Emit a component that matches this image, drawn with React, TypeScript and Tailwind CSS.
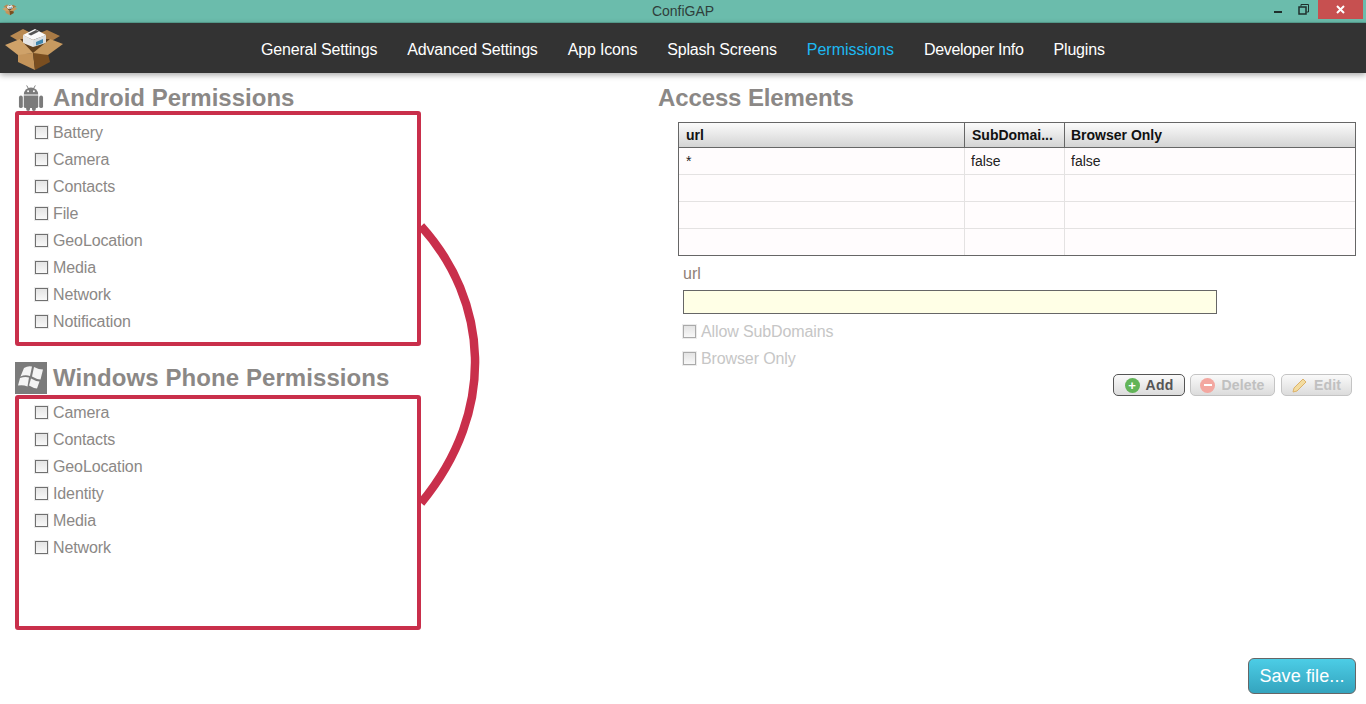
const androidPermissions = ['Battery', 'Camera', 'Contacts', 'File', 'GeoLocation', 'Media', 'Network', 'Notification'];
const windowsPermissions = ['Camera', 'Contacts', 'GeoLocation', 'Identity', 'Media', 'Network'];
const navItems = ['General Settings', 'Advanced Settings', 'App Icons', 'Splash Screens', 'Permissions', 'Developer Info', 'Plugins'];
const rows = [
  ['*', 'false', 'false'],
  ['', '', ''],
  ['', '', ''],
  ['', '', ''],
];

function BoxLogo({ className }: { className: string }) {
  return (
    <svg viewBox="0 0 66 50" className={className}>
      {/* back flaps */}
      <polygon points="10,13 23,6 35,12 22,20" fill="#b98a52" />
      <polygon points="47,7 60,13 48,20 35,12" fill="#a87a45" />
      <polygon points="20,16 50,16 48,26 33,30 20,26" fill="#5f3f1d" />
      {/* the white box */}
      <polygon points="23,12 35,6 46,12 33,17" fill="#fafafa" />
      <polygon points="23,12 33,17 33,24 23,20" fill="#e6e6e6" />
      <polygon points="33,17 46,12 46,20 33,24" fill="#d8dde0" />
      <polygon points="28,11 36,7 39,8.500 31,12.500" fill="#555555" />
      <polygon points="36,19 43,16 43,20 36,22.500" fill="#3f86ad" />
      {/* carton */}
      <polygon points="18,31 33,30 35,47 18,39" fill="#c4945a" />
      <polygon points="33,30 48,31 50,39 35,47" fill="#7a4e20" />
      <polygon points="5,22 20,16 33,30 18,32" fill="#cfa269" />
      <polygon points="63,21 50,16 33,30 48,32" fill="#c79a60" />
    </svg>
  );
}

function Check({ label, muted }: { label: string; muted?: boolean }) {
  return (
    <label className={`flex h-[27px] items-center gap-[5px] text-base tracking-[-0.12px] ${muted ? 'text-[#c6c6c6]' : 'text-[#8b8886]'}`}>
      <span className={`h-[13px] w-[13px] border bg-gradient-to-b from-[#e4e4e4] to-[#f8f8f8] shadow-[0_0_0_1px_#ececec] ${muted ? 'border-[#aaaaaa]' : 'border-[#707070]'}`} />
      {label}
    </label>
  );
}

function AndroidIcon() {
  return (
    <svg viewBox="0 0 26 28" className="h-[27px] w-[26px]">
      <g fill="#7b7b7b">
        <path d="M5.500 11a7.500 7.500 0 0 1 15 0z" />
        <path d="M5.500 12h15v11a2 2 0 0 1-2 2h-11a2 2 0 0 1-2-2z" />
        <rect x="0.500" y="12" width="4" height="13" rx="2" />
        <rect x="21.500" y="12" width="4" height="13" rx="2" />
        <rect x="8" y="23" width="4" height="5" rx="2" />
        <rect x="14" y="23" width="4" height="5" rx="2" />
      </g>
      <path d="M8.500 1.500l2 3.500M17.500 1.500l-2 3.500" stroke="#7b7b7b" strokeWidth="1" />
      <circle cx="10" cy="7.500" r="1" fill="#ffffff" />
      <circle cx="16" cy="7.500" r="1" fill="#ffffff" />
    </svg>
  );
}

function WindowsIcon() {
  return (
    <div className="h-8 w-8 bg-[#7b7b7b]">
      <svg viewBox="0 0 32 32" className="h-8 w-8">
        <g fill="#f4f4f4">
          <path d="M9 6Q13 3.500 17 4.500L15 14Q10 12.500 5.500 14.500z" />
          <path d="M19 5Q24 7.500 28 7.500L25.500 17.500Q21 17 17 14.500z" />
          <path d="M5 16Q10 14.500 14 15.500L12.500 24.500Q8 22.500 3 23.500z" />
          <path d="M16 16.500Q20 19 24.500 19.500L22 26.500Q18 26 14 23.500z" />
        </g>
      </svg>
    </div>
  );
}

function ActionButton({ label, muted, className, children }: { label: string; muted?: boolean; className: string; children: React.ReactNode }) {
  return (
    <button className={`flex h-[22px] items-center justify-center gap-[6px] rounded-[5px] border bg-gradient-to-b from-[#fafafa] to-[#dcdcdc] text-sm font-bold tracking-[0.2px] ${muted ? 'border-[#c4c4c4] text-[#c0c0c0]' : 'border-[#555555] text-[#555555]'} ${className}`}>
      {children}
      {label}
    </button>
  );
}

export default function App() {
  return (
    <div className="relative flex h-[704px] w-[1366px] flex-col overflow-hidden bg-white font-['Liberation_Sans',Arial,sans-serif]">
      {/* title bar */}
      <div className="relative flex h-[23px] shrink-0 items-center justify-center border-b border-[#5aa595] bg-[#6bbcac] pb-[1px] text-sm text-[#2f3f3b]">
        <BoxLogo className="absolute left-[1px] top-[3px] h-[13px] w-[17px]" />
        ConfiGAP
        <div className="absolute right-[3px] top-0 flex h-[19px] items-start">
          <span className="mr-[16px] mt-[11px] h-[2px] w-[8px] bg-[#1f2f2c]" />
          <svg viewBox="0 0 11 11" className="mr-[9px] mt-[4px] h-[11px] w-[11px]">
            <path d="M3 2.500V.5h7.500V8H8.500" fill="none" stroke="#1f2f2c" />
            <rect x="1" y="3" width="7" height="7" fill="none" stroke="#1f2f2c" strokeWidth="1.500" />
          </svg>
          <span className="flex h-[19px] w-[45px] items-center justify-center bg-[#c75050]">
            <svg viewBox="0 0 9 9" className="h-[9px] w-[9px]">
              <path d="M1 1l7 7M8 1L1 8" stroke="#ffffff" strokeWidth="2" />
            </svg>
          </span>
        </div>
      </div>

      {/* nav */}
      <div className="relative z-10 flex h-[50px] shrink-0 items-center bg-[#333333] pl-[261px] pt-[3px] shadow-[0_2px_6px_rgba(0,0,0,0.35)]">
        <BoxLogo className="absolute left-0 top-0 h-[50px] w-[66px]" />
        <nav className="flex gap-[30px] text-base text-white">
          {navItems.map((item) => (
            <span
              key={item}
              className={item === 'Permissions' ? 'text-[#1db9f2]' : item === 'Developer Info' ? 'tracking-[-0.32px]' : 'tracking-[-0.18px]'}
            >
              {item}
            </span>
          ))}
        </nav>
      </div>

      <div className="flex flex-1">
        {/* left column */}
        <div className="w-[658px] shrink-0 pl-[15px]">
          <div className="flex h-[38px] items-end gap-[9px] pl-[3px]">
            <AndroidIcon />
            <h2 className="text-2xl font-bold leading-[26px] text-[#8b8886]">Android Permissions</h2>
          </div>
          <div className="h-[235px] w-[406px] rounded-[3px] border-4 border-[#c92f4b] pl-4 pt-1">
            {androidPermissions.map((p) => (
              <Check key={p} label={p} />
            ))}
          </div>
          <div className="mt-[17px] flex h-8 items-center gap-[6px] pb-[2px]">
            <WindowsIcon />
            <h2 className="text-2xl font-bold tracking-[0.08px] text-[#8b8886]">Windows Phone Permissions</h2>
          </div>
          <div className="h-[235px] w-[406px] rounded-[3px] border-4 border-[#c92f4b] pl-4">
            {windowsPermissions.map((p) => (
              <Check key={p} label={p} />
            ))}
          </div>
        </div>

        {/* right column */}
        <div className="flex-1">
          <h2 className="h-[49px] pt-[11px] text-2xl font-bold leading-[28px] tracking-[-0.12px] text-[#8b8886]">Access Elements</h2>
          <div className="ml-[20px] w-[678px] border border-[#666666] bg-[#fffcfd] text-sm">
            <div className="grid h-[25px] grid-cols-[286px_100px_1fr] border-b border-[#666666] bg-gradient-to-b from-[#fbfbfb] to-[#d4d4d4] font-bold text-[#111111]">
              <div className="border-r border-[#666666] pl-[7px] leading-[24px]">url</div>
              <div className="border-r border-[#666666] pl-[7px] leading-[24px]">SubDomai...</div>
              <div className="pl-[6px] leading-[24px]">Browser Only</div>
            </div>
            {rows.map((row, i) => (
              <div key={i} className={`grid grid-cols-[286px_100px_1fr] text-[#222222] ${i < 3 ? 'h-[27px] border-b border-[#e4e2e2]' : 'h-[26px]'}`}>
                <div className="border-r border-[#e4e2e2] pl-[7px] leading-[26px]">{row[0]}</div>
                <div className="border-r border-[#e4e2e2] pl-[6px] leading-[26px]">{row[1]}</div>
                <div className="pl-[6px] leading-[26px]">{row[2]}</div>
              </div>
            ))}
          </div>

          <div className="ml-[25px] mt-[8px] w-[534px]">
            <div className="h-[26px] text-base leading-[20px] text-[#8f7f76]">url</div>
            <div className="h-[24px] border border-[#666666] bg-[#ffffe6]" />
            <div className="mt-[4px]">
              <Check label="Allow SubDomains" muted />
              <Check label="Browser Only" muted />
            </div>
          </div>

          <div className="ml-[455px] mt-[2px] flex">
            <ActionButton label="Add" className="w-[72px]">
              <span className="flex h-[15px] w-[15px] items-center justify-center rounded-full bg-[#62b458] text-[13px] leading-none text-white">+</span>
            </ActionButton>
            <ActionButton label="Delete" muted className="ml-[5px] w-[85px]">
              <span className="flex h-[15px] w-[15px] items-center justify-center rounded-full bg-[#f3a7a0] text-white">
                <span className="h-[2px] w-[8px] bg-white" />
              </span>
            </ActionButton>
            <ActionButton label="Edit" muted className="ml-[6px] w-[71px]">
              <svg viewBox="0 0 16 16" className="h-[16px] w-[16px]">
                <path d="M1 15l1-4L11 2l3 3-9 9z" fill="#f3dca0" stroke="#dcb26a" />
              </svg>
            </ActionButton>
          </div>
        </div>
      </div>

      {/* bracket joining the two permission boxes */}
      <svg viewBox="0 0 70 290" className="absolute left-[418px] top-[220px] h-[290px] w-[70px]">
        <path d="M3 6C70 80 80 190 3 283" fill="none" stroke="#c92f4b" strokeWidth="8.500" />
      </svg>

      <button className="absolute bottom-[10px] right-[10px] h-[36px] w-[108px] rounded-[6px] border border-[#666666] bg-gradient-to-b from-[#4ccde6] to-[#34a4be] text-lg tracking-[0.1px] text-white">
        Save file...
      </button>
    </div>
  );
}
